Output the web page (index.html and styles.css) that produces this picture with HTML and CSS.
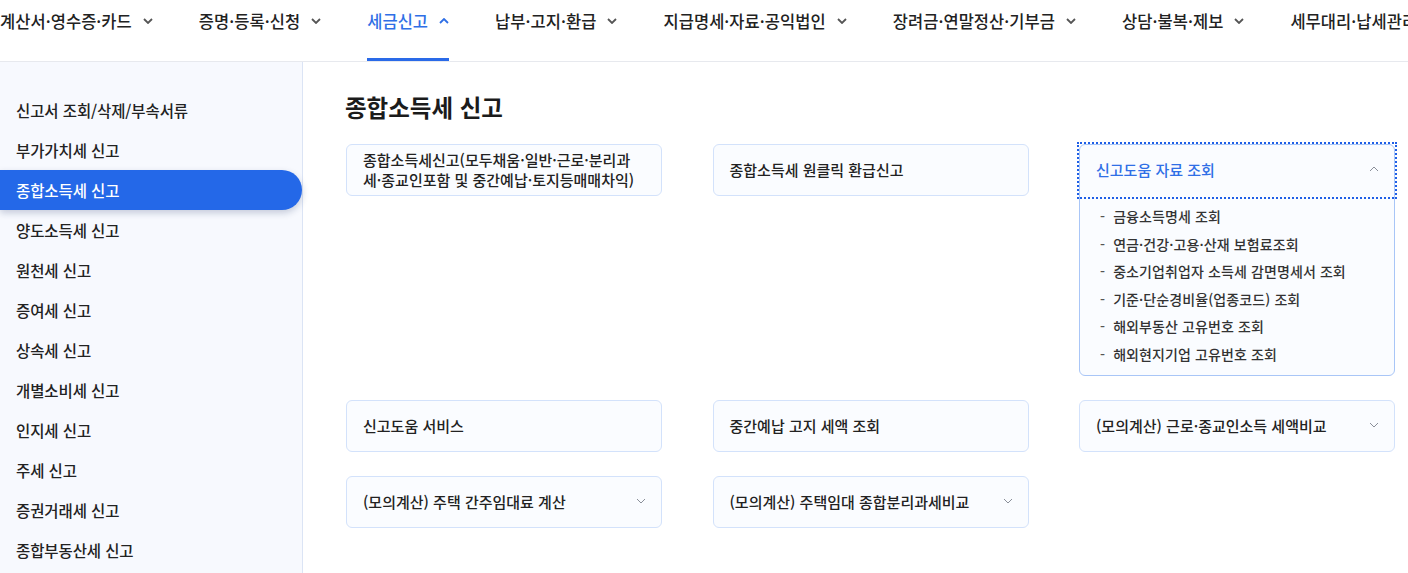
FILE: index.html
```html
<!DOCTYPE html>
<html lang="ko">
<head>
    <meta charset="UTF-8">
    <meta name="viewport" content="width=device-width, initial-scale=1.0">
    <title>종합소득세 신고</title>
    <link rel="stylesheet" href="styles.css">
</head>
<body>
    <header class="gnb">
        <a href="#" class="gnb-item">계산서·영수증·카드 <svg class="chev" viewBox="0 0 10 6"><path d="M1 1l4 4 4-4"/></svg></a>
        <a href="#" class="gnb-item">증명·등록·신청 <svg class="chev" viewBox="0 0 10 6"><path d="M1 1l4 4 4-4"/></svg></a>
        <a href="#" class="gnb-item active">세금신고 <svg class="chev" viewBox="0 0 10 6"><path d="M1 5l4-4 4 4"/></svg></a>
        <a href="#" class="gnb-item">납부·고지·환급 <svg class="chev" viewBox="0 0 10 6"><path d="M1 1l4 4 4-4"/></svg></a>
        <a href="#" class="gnb-item">지급명세·자료·공익법인 <svg class="chev" viewBox="0 0 10 6"><path d="M1 1l4 4 4-4"/></svg></a>
        <a href="#" class="gnb-item">장려금·연말정산·기부금 <svg class="chev" viewBox="0 0 10 6"><path d="M1 1l4 4 4-4"/></svg></a>
        <a href="#" class="gnb-item">상담·불복·제보 <svg class="chev" viewBox="0 0 10 6"><path d="M1 1l4 4 4-4"/></svg></a>
        <a href="#" class="gnb-item">세무대리·납세관리 <svg class="chev" viewBox="0 0 10 6"><path d="M1 1l4 4 4-4"/></svg></a>
    </header>

    <div class="layout">
        <aside class="snb">
            <ul>
                <li><a href="#">신고서 조회/삭제/부속서류</a></li>
                <li><a href="#">부가가치세 신고</a></li>
                <li class="on"><a href="#">종합소득세 신고</a></li>
                <li><a href="#">양도소득세 신고</a></li>
                <li><a href="#">원천세 신고</a></li>
                <li><a href="#">증여세 신고</a></li>
                <li><a href="#">상속세 신고</a></li>
                <li><a href="#">개별소비세 신고</a></li>
                <li><a href="#">인지세 신고</a></li>
                <li><a href="#">주세 신고</a></li>
                <li><a href="#">증권거래세 신고</a></li>
                <li><a href="#">종합부동산세 신고</a></li>
            </ul>
        </aside>

        <main class="content">
            <h1 class="title">종합소득세 신고</h1>
            <div class="grid">
                <a href="#" class="card two-line">종합소득세신고(모두채움·일반·근로·분리과<br>세·종교인포함 및 중간예납·토지등매매차익)</a>
                <a href="#" class="card">종합소득세 원클릭 환급신고</a>
                <div class="card open">
                    <a href="#" class="card-head">신고도움 자료 조회 <svg class="arrow" viewBox="0 0 10 6"><path d="M1 5l4-4 4 4"/></svg></a>
                    <ul class="sub">
                        <li>금융소득명세 조회</li>
                        <li>연금·건강·고용·산재 보험료조회</li>
                        <li>중소기업취업자 소득세 감면명세서 조회</li>
                        <li>기준·단순경비율(업종코드) 조회</li>
                        <li>해외부동산 고유번호 조회</li>
                        <li>해외현지기업 고유번호 조회</li>
                    </ul>
                </div>
                <a href="#" class="card">신고도움 서비스</a>
                <a href="#" class="card">중간예납 고지 세액 조회</a>
                <a href="#" class="card">(모의계산) 근로·종교인소득 세액비교 <svg class="arrow" viewBox="0 0 10 6"><path d="M1 1l4 4 4-4"/></svg></a>
                <a href="#" class="card">(모의계산) 주택 간주임대료 계산 <svg class="arrow" viewBox="0 0 10 6"><path d="M1 1l4 4 4-4"/></svg></a>
                <a href="#" class="card">(모의계산) 주택임대 종합분리과세비교 <svg class="arrow" viewBox="0 0 10 6"><path d="M1 1l4 4 4-4"/></svg></a>
            </div>
        </main>
    </div>
</body>
</html>
```

FILE: styles.css
```css
body {
    margin: 0;
    font-family: "Noto Sans CJK KR", "Noto Sans", sans-serif;
    color: #222;
    background: #fff;
    overflow: hidden;
}
a {
    color: inherit;
    text-decoration: none;
}
ul {
    list-style: none;
    margin: 0;
    padding: 0;
}

/* top menu */
.gnb {
    display: flex;
    gap: 46px;
    height: 61px;
    border-bottom: 1px solid #e7e9ee;
    white-space: nowrap;
    overflow: hidden;
}
.gnb-item {
    display: flex;
    align-items: flex-start;
    gap: 11px;
    height: 61px;
    box-sizing: border-box;
    padding-top: 8px;
    line-height: 26px;
    font-size: 16.5px;
    font-weight: 500;
    letter-spacing: 0.05px;
    color: #222;
    border-bottom: 3px solid transparent;
    flex-shrink: 0;
}
.gnb-item .chev {
    width: 10px;
    height: 6px;
    margin-top: 10px;
    fill: none;
    stroke: #555;
    stroke-width: 1.8;
}
.gnb-item.active {
    color: #2f6fe6;
    border-bottom-color: #2a6ae8;
}
.gnb-item.active .chev {
    stroke: #2f6fe6;
}

.layout {
    display: flex;
}

/* side menu */
.snb {
    width: 302px;
    min-height: calc(100vh - 62px);
    padding-top: 28px;
    background: #f7f9fe;
    border-right: 1px solid #dbe4f5;
    flex-shrink: 0;
}
.snb li a {
    display: block;
    height: 40px;
    line-height: 40px;
    padding-left: 16px;
    font-size: 15.5px;
    font-weight: 500;
    letter-spacing: -0.1px;
    color: #222;
}
.snb li.on a {
    background: #2468e8;
    color: #fff;
    border-radius: 0 20px 20px 0;
    box-shadow: 0 3px 7px rgba(20, 40, 90, 0.22);
}

/* content */
.content {
    padding: 29px 0 0 43px;
}
.title {
    margin: 0 0 21px -1px;
    font-size: 23.5px;
    line-height: 32px;
    font-weight: 700;
    color: #1b1b1b;
}
.grid {
    display: grid;
    grid-template-columns: repeat(3, 316px);
    column-gap: 50.5px;
    row-gap: 24px;
    align-items: start;
}
.card {
    display: flex;
    align-items: center;
    justify-content: space-between;
    height: 52px;
    box-sizing: border-box;
    padding: 0 15px 2px 16px;
    background: #fafcff;
    border: 1px solid #d3e2fb;
    border-radius: 6px;
    font-size: 15px;
    font-weight: 500;
    color: #222;
}
.card.two-line {
    padding-bottom: 0;
    line-height: 20px;
}
.card .arrow {
    width: 10px;
    height: 6px;
    fill: none;
    stroke: #8a8f99;
    stroke-width: 1;
    flex-shrink: 0;
}
.card.open {
    display: block;
    height: auto;
    padding: 0;
    border-color: #a9c6f7;
}
.card-head {
    display: flex;
    align-items: center;
    justify-content: space-between;
    height: 48px;
    padding: 0 15px 3px 16px;
    color: #2f6fe6;
    outline: 2px dotted #1f5fe6;
    outline-offset: 1px;
}
.sub {
    padding: 7px 0 7px 20px;
}
.sub li {
    line-height: 27.5px;
    font-size: 14px;
    letter-spacing: 0.1px;
    color: #333;
}
.sub li::before {
    content: "-";
    margin-right: 8px;
    color: #555;
}
```
